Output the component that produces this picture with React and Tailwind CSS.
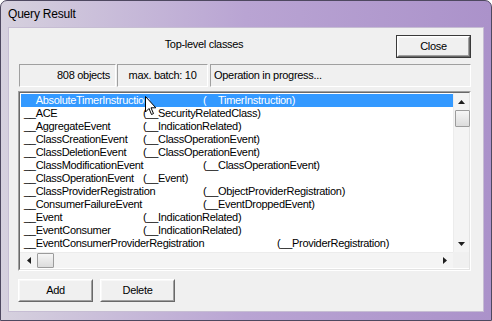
import React from 'react';

const ROWS = [
  { name: '__AbsoluteTimerInstruction', base: '(__TimerInstruction)', w: 'w-[179px]' },
  { name: '__ACE', base: '(__SecurityRelatedClass)', w: 'w-[119px]' },
  { name: '__AggregateEvent', base: '(__IndicationRelated)', w: 'w-[119px]' },
  { name: '__ClassCreationEvent', base: '(__ClassOperationEvent)', w: 'w-[119px]' },
  { name: '__ClassDeletionEvent', base: '(__ClassOperationEvent)', w: 'w-[119px]' },
  { name: '__ClassModificationEvent', base: '(__ClassOperationEvent)', w: 'w-[179px]' },
  { name: '__ClassOperationEvent', base: '(__Event)', w: 'w-[119px]' },
  { name: '__ClassProviderRegistration', base: '(__ObjectProviderRegistration)', w: 'w-[179px]' },
  { name: '__ConsumerFailureEvent', base: '(__EventDroppedEvent)', w: 'w-[179px]' },
  { name: '__Event', base: '(__IndicationRelated)', w: 'w-[119px]' },
  { name: '__EventConsumer', base: '(__IndicationRelated)', w: 'w-[119px]' },
  { name: '__EventConsumerProviderRegistration', base: '(__ProviderRegistration)', w: 'w-[253px]' },
];

// in the selected row the underscores get clipped by the highlight
const Label = ({ text, selected }) => {
  if (!selected) return text;
  return text.split(/(_+)/).map((part, i) =>
    part.startsWith('_') ? <span key={i} className="text-[#3399ff]">{part}</span> : part
  );
};

const Button = ({ children, isDefault = false, className = '' }) => (
  <div className={`${isDefault ? 'border border-[#3a3a3a]' : ''} ${className}`}>
    <div className="h-full border border-t-white border-l-white border-r-[#696969] border-b-[#696969]">
      <div className="h-full flex items-center justify-center border border-t-[#f8f8f8] border-l-[#f8f8f8] border-r-[#a0a0a0] border-b-[#a0a0a0] bg-[#f0f0f0]">
        {children}
      </div>
    </div>
  </div>
);

const Field = ({ children, className = '' }) => (
  <div className={`h-full flex items-center border border-t-[#a0a0a0] border-l-[#a0a0a0] border-r-white border-b-white ${className}`}>
    {children}
  </div>
);

const Arrow = ({ dir }) => {
  const pts = {
    up: '0,4 3.5,0 7,4',
    down: '0,0 3.5,4 7,0',
    left: '4,0 0,3.5 4,7',
    right: '0,0 4,3.5 0,7',
  }[dir];
  const vert = dir === 'up' || dir === 'down';
  return (
    <svg width={vert ? 7 : 4} height={vert ? 4 : 7} viewBox={vert ? '0 0 7 4' : '0 0 4 7'}>
      <polygon points={pts} fill="#1e1e1e" />
    </svg>
  );
};

const Thumb = ({ className = '' }) => (
  <div className={`border border-[#9c9c9c] rounded-[1px] bg-linear-to-b from-[#f6f6f6] to-[#dcdcdc] ${className}`} />
);

export default function App() {
  return (
    <div className="w-[492px] h-[321px] bg-white font-['Liberation_Sans',Arial,sans-serif] text-[11px] tracking-[-0.3px] text-black">
      <div className="w-full h-full flex flex-col rounded-t-[7px] border border-[#4e4860] bg-linear-to-r from-[#d6d1de] via-[#b9a4d3] to-[#ab92ca]">
        {/* title bar */}
        <div className="h-[26px] flex items-center pl-[7px] text-[12px] tracking-[-0.2px] text-black">Query Result</div>

        {/* client area */}
        <div className="mx-[7px] h-[285px] border border-[#c6bdd3] bg-[#f0f0f0] flex flex-col pl-[9px] pr-[12px]">
          <div className="mt-[7px] h-[23px] flex">
            <div className="w-[372px] text-center pt-[1px]">Top-level classes</div>
            <Button isDefault className="ml-auto w-[75px] h-[23px]">Close</Button>
          </div>

          <div className="mt-[6px] h-[23px] flex pl-[1px]">
            <Field className="w-[97px] justify-end pr-[5px]">808 objects</Field>
            <Field className="w-[91px] justify-center ml-[1px]">max. batch: 10</Field>
            <Field className="ml-[2px] flex-1 pl-[3px]">Operation in progress...</Field>
          </div>

          {/* list box */}
          <div className="mt-[4px] h-[180px] border border-t-[#a0a0a0] border-l-[#a0a0a0] border-r-white border-b-white">
            <div className="h-full border border-t-[#696969] border-l-[#696969] border-r-[#e3e3e3] border-b-[#e3e3e3] bg-white flex flex-col">
              <div className="flex h-[159px]">
                <div className="relative flex-1 overflow-hidden pt-[1px]">
                  {ROWS.map((r, i) => (
                    <div key={r.name} className={`h-[13px] leading-[13px] flex whitespace-nowrap pl-[3px] ml-[1px] ${i === 0 ? 'bg-[#3399ff] text-white' : ''}`}>
                      <span className={`${r.w} shrink-0`}><Label text={r.name} selected={i === 0} /></span>
                      <span><Label text={r.base} selected={i === 0} /></span>
                    </div>
                  ))}
                  {/* mouse pointer */}
                  <svg className="absolute left-[125px] top-[3px]" width="12" height="20" viewBox="0 0 12 20">
                    <path d="M0.5 0.5 L0.5 16 L4 12.5 L6.5 18.5 L8.5 17.6 L6 11.8 L10.8 11.8 Z" fill="white" stroke="black" strokeWidth="1" strokeLinejoin="miter" />
                  </svg>
                </div>
                {/* vertical scrollbar */}
                <div className="w-[16px] bg-[#f4f4f4] border-l border-[#ececec] flex flex-col items-center">
                  <div className="h-[17px] flex items-center justify-center"><Arrow dir="up" /></div>
                  <Thumb className="w-[15px] h-[17px] ml-[1px]" />
                  <div className="flex-1" />
                  <div className="h-[17px] flex items-center justify-center"><Arrow dir="down" /></div>
                </div>
              </div>
              {/* horizontal scrollbar */}
              <div className="h-[16px] flex">
                <div className="flex-1 bg-[#f4f4f4] border-t border-[#ececec] flex items-center">
                  <div className="w-[17px] h-full flex items-center justify-center"><Arrow dir="left" /></div>
                  <Thumb className="w-[17px] h-[15px]" />
                  <div className="flex-1" />
                  <div className="w-[17px] h-full flex items-center justify-center"><Arrow dir="right" /></div>
                </div>
                <div className="w-[16px] bg-[#f0f0f0]" />
              </div>
            </div>
          </div>

          <div className="mt-[8px] h-[23px] flex gap-[7px]">
            <Button className="w-[75px] h-[23px]">Add</Button>
            <Button className="w-[75px] h-[23px]">Delete</Button>
          </div>
        </div>
      </div>
    </div>
  );
}
